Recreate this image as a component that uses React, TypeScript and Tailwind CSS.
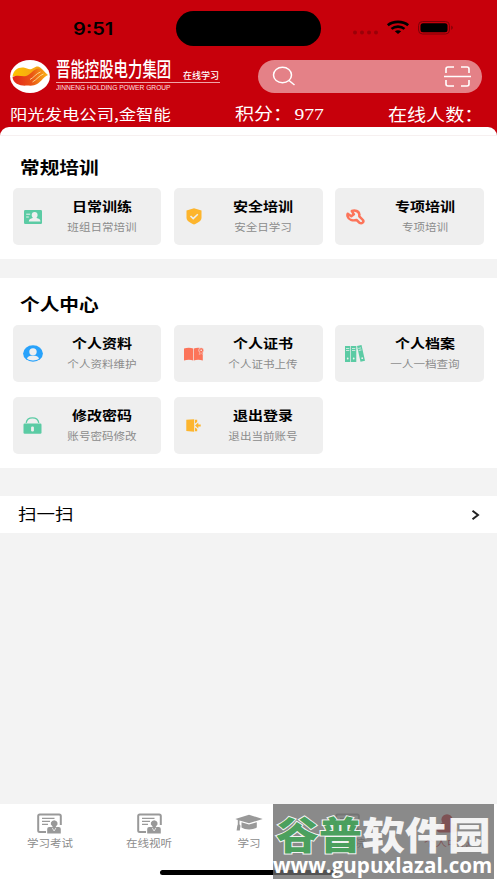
import type { ReactNode } from 'react';

type Entry = { title: string; desc: string; icon: ReactNode };

const wide = 'inline-block whitespace-nowrap scale-x-[1.155]';

const trainings: Entry[] = [
  { title: '日常训练', desc: '班组日常培训', icon: <IdCardIcon /> },
  { title: '安全培训', desc: '安全日学习', icon: <ShieldIcon /> },
  { title: '专项培训', desc: '专项培训', icon: <WrenchIcon /> },
];

const personal: Entry[] = [
  { title: '个人资料', desc: '个人资料维护', icon: <UserIcon /> },
  { title: '个人证书', desc: '个人证书上传', icon: <BookIcon /> },
  { title: '个人档案', desc: '一人一档查询', icon: <FilesIcon /> },
  { title: '修改密码', desc: '账号密码修改', icon: <LockIcon /> },
  { title: '退出登录', desc: '退出当前账号', icon: <ExitIcon /> },
];

const tabs = [
  { label: '学习考试', icon: <ExamIcon />, active: false },
  { label: '在线视听', icon: <ExamIcon />, active: false },
  { label: '学习', icon: <CapIcon />, active: false },
  { label: '电影院', icon: <ExamIcon />, active: false },
  { label: '个人中心', icon: <PersonIcon />, active: true },
];

function IdCardIcon() {
  return (
    <svg width="18" height="14" viewBox="0 0 18 14">
      <rect width="18" height="14" rx="1.2" fill="#5bcba4" />
      <path d="M2.2 4.2h4M2.2 7h2.6" stroke="#efefef" strokeWidth="1" />
      <path d="M10.600 2c1.900 0 3 1.300 3 3 0 1-.4 1.900-1 2.400v.5c1.900.5 3.900 1.200 3.900 3.500H4.800c0-2.300 2-3 3.900-3.500v-.5c-.6-.5-1-1.400-1-2.400 0-1.700 1.100-3 2.900-3z" fill="#efefef" />
    </svg>
  );
}

function ShieldIcon() {
  return (
    <svg width="16" height="17" viewBox="0 0 16 17">
      <path d="M8 .3 15.500 2.500v7.300c0 3.200-4 5.300-7.500 6.700-3.500-1.400-7.500-3.500-7.500-6.700V2.500z" fill="#fdb52d" />
      <path d="m4.500 8 2.700 2.600 4.600-4.400" fill="none" stroke="#efefef" strokeWidth="1.500" />
    </svg>
  );
}

function WrenchIcon() {
  return (
    <svg width="19" height="16" viewBox="0 0 19 16" fill="none" stroke="#fc745a" strokeWidth="2.500" strokeLinejoin="round">
      <path d="M5.800 2C9 .9 13 2 13.300 5.500c.1.700-.1 1.300 0 1.800l3.600 3.700c1.500 2-1 4-3.300 2.900l-3-2.900c-4 .9-8-.4-9-3.700-.3-1-.2-1.900.1-2.600l3.600 2.600 2.600-2z" />
    </svg>
  );
}

function UserIcon() {
  return (
    <svg width="20" height="17" viewBox="0 0 20 17">
      <ellipse cx="10" cy="8.500" rx="9.900" ry="8.300" fill="#28a2fb" />
      <ellipse cx="10" cy="6.800" rx="3.700" ry="3.500" fill="#efefef" />
      <path d="M4 13.800c.4-2.300 3-3.200 6-3.200s5.600.9 6 3.200c-3 2.300-9 2.300-12 0z" fill="#efefef" />
    </svg>
  );
}

function BookIcon() {
  return (
    <svg width="20" height="14" viewBox="0 0 20 14">
      <path d="M0 1.500C3 .5 6.500.5 9.200 1.500v12c-2.500-1-6-1-9.200 0zM9.900 1.500c2.500-1 6-1 8.900 0v12c-3-1-6.300-1-8.900 0z" fill="#fc745a" />
      <circle cx="17.200" cy="3.200" r="2.500" fill="#fc745a" stroke="#efefef" strokeWidth=".6" />
      <path d="m15.700 5.300-.5 2.200 2-1 2 1-.5-2.200" fill="#fc745a" stroke="#efefef" strokeWidth=".4" />
      <circle cx="17.200" cy="3.200" r=".8" fill="#efefef" />
    </svg>
  );
}

function FilesIcon() {
  return (
    <svg width="20" height="17" viewBox="0 0 20 17" fill="#5bcba4">
      <path d="M0 .9h5.300V17H0zM6 .9h5.300V17H6zM12 .9l4.500-.8L20 15.800l-4.500.9z" />
      <g fill="#efefef">
        <path d="M1 3h3.300v.7H1zM1 5h3.300v.7H1zM7 3h3.300v.7H7zM7 5h3.300v.7H7zM13.200 3l2.800-.5.2.7-2.800.5zM13.600 5l2.800-.5.2.7-2.800.5z" />
        <circle cx="2.700" cy="13.500" r=".9" />
        <circle cx="8.700" cy="13.500" r=".9" />
        <circle cx="17.200" cy="13.200" r=".9" />
      </g>
    </svg>
  );
}

function LockIcon() {
  return (
    <svg width="19" height="17" viewBox="0 0 19 17">
      <path d="M3.200 5.800C4.300-.8 14.500-.8 15.800 5.800" fill="none" stroke="#5bcba4" strokeWidth="1.300" />
      <rect x=".5" y="6.600" width="18" height="10.200" rx="1.200" fill="#5bcba4" />
      <rect x="8.100" y="9.500" width="2.800" height="5" rx="1.200" fill="#efefef" />
    </svg>
  );
}

function ExitIcon() {
  return (
    <svg width="15" height="13" viewBox="0 0 15 13" fill="#fdb52d">
      <path d="M.3.700 8.200.3v12.500L.3 12zM9 .7h2.200v2.400L9 4.600zM9 12.300h2.200V9.900L9 8.400z" />
      <path d="M9 6.500 12.300 3.500v2h2.400v2h-2.400v2z" />
    </svg>
  );
}

function ExamIcon() {
  return (
    <svg width="25" height="21" viewBox="0 0 25 21">
      <path d="M9 19H2.800Q1.200 19 1.200 17.500V3q0-1.500 1.600-1.500h19.400Q23.800 1.500 23.800 3v9" fill="none" stroke="#999" strokeWidth="2" />
      <path d="M5 5.300h12.500M5 8.300h8M5 11.300h6" stroke="#999" strokeWidth="1.300" />
      <path d="M17.200 7.200a3.700 3.200 0 0 1 2 5.700l-.5 1.200h3.100q2 0 2 2V20.500H10.200v-4.400q0-2 2-2h3.500l-.5-1.200a3.700 3.200 0 0 1 2-5.700z" fill="#999" />
      <path d="m15.200 14.800 1.900 3.200 1.900-3.200" fill="none" stroke="#fff" strokeWidth=".7" />
    </svg>
  );
}

function CapIcon() {
  return (
    <svg width="28" height="18" viewBox="0 0 28 18" fill="#999">
      <path d="M14 .8 27.700 5 14 9.300 4.500 6.400v3.800l1 1.500-.7 4.800H1.600l.7-4.800.5-1.300V5.900L.3 5z" />
      <path d="M6.500 8.200 14 10.600l7.800-2.400v5.400c-3.500 2.500-11.800 2.500-15.300 0z" />
    </svg>
  );
}

function PersonIcon() {
  return (
    <svg width="20" height="19" viewBox="0 0 20 19" fill="#c7000b">
      <ellipse cx="10" cy="5.500" rx="5.600" ry="5.300" />
      <path d="M5.500 8.500h9l3 2q2.500 2 2.500 6.500-1 1.500-3 1.500H3Q1 18.500 0 17q0-4.500 2.500-6.500z" />
    </svg>
  );
}

function BrandMark() {
  return (
    <svg width="40" height="33" viewBox="0 0 40 33">
      <defs>
        <linearGradient id="gold" x1="0" y1="0" x2="1" y2="0">
          <stop offset="0" stopColor="#fdc300" />
          <stop offset="1" stopColor="#f39a1c" />
        </linearGradient>
        <linearGradient id="flame" x1="0" y1="0" x2="1" y2="0">
          <stop offset="0" stopColor="#e3231b" />
          <stop offset=".55" stopColor="#ea5514" />
          <stop offset="1" stopColor="#fbb617" />
        </linearGradient>
      </defs>
      <ellipse cx="20" cy="16.500" rx="19.900" ry="16.400" fill="#fff" />
      <path d="M2.500 16.500C3.500 10 8 7 13.500 7.500c3.500.3 5 2.500 8 1.500l5-2.500c3-.5 6 2.500 7.500 5L22 19c-7 2-12-5-19.500-2.500z" fill="url(#gold)" />
      <path d="M2.500 17c5-2.500 8.500-.5 12.500-.8 5.500-.5 8-7.700 14-7.700 3 0 6 4 9 6.500-5 2-8 9-14 10.300-3 .7-5 .2-8 .3-6 .3-13-2-13.500-8.600z" fill="url(#flame)" />
      <path d="M20 19.500c4-2 6-6 10.500-7.500M22.500 22c4.500-2.500 6.500-6.500 11-8" fill="none" stroke="#ffe9a8" strokeWidth=".8" />
    </svg>
  );
}

function StatusBar() {
  return (
    <div className="relative flex h-[56px] items-start">
      <div className="absolute left-[73px] top-[18px] text-[17px] font-semibold leading-[20px] text-black">
        <span className="inline-block origin-left scale-x-[1.180] font-['Inter']">9:51</span>
      </div>
      <div className="ml-[176px] mt-[11px] h-[35px] w-[145px] rounded-full bg-black" />
      <svg className="ml-[31px] mt-[20px]" width="102" height="16" viewBox="0 0 102 16">
        <g fill="#9a0008">
          <circle cx="3" cy="12.400" r="2" />
          <circle cx="10" cy="12.400" r="2" />
          <circle cx="17" cy="12.400" r="2" />
          <circle cx="24" cy="12.400" r="2" />
        </g>
        <g fill="none" stroke="#000" strokeWidth="2.600">
          <path d="M35.800 5.300C41 .7 51 .7 56.200 5.300" />
          <path d="M39.500 8.900c3.500-3.100 9.500-3.100 13 0" />
        </g>
        <path d="M42.800 11.200q3.200-2 6.400 0L46 14z" />
        <rect x="66.500" y="1.500" width="31" height="12.500" rx="4" fill="none" stroke="#7d0007" strokeWidth="1" />
        <rect x="68.500" y="3.300" width="27" height="9" rx="2.500" />
        <path d="M99.300 5.600q3 2.100 0 4.300z" fill="#7d0007" />
      </svg>
    </div>
  );
}

function Header() {
  return (
    <header className="h-[127px] bg-[#c7000b] text-white">
      <StatusBar />
      <div className="flex h-[40px] items-center pl-[10px]">
        <BrandMark />
        <div className="ml-[6px] h-[38px] w-[164px]">
          <div className="flex h-[26px] items-end justify-between border-b border-[#f0a5a8]">
            <div className="w-[118px]">
              <span className="inline-block origin-left scale-x-[0.720] whitespace-nowrap text-[20px] font-medium leading-[22px]">
                晋能控股电力集团
              </span>
            </div>
            <span className="mr-[1px] text-[9px] font-medium leading-[12px]">在线学习</span>
          </div>
          <span className="block w-max origin-left scale-x-[0.950] whitespace-nowrap font-['Liberation_Sans'] text-[7px] leading-[10px] text-[#ffe0e0]">
            JINNENG HOLDING POWER GROUP
          </span>
        </div>
        <div className="ml-[38px] flex h-[33px] w-[224px] items-center justify-between rounded-full bg-[#e48187] pl-[14px] pr-[11px]">
          <svg width="24" height="20" viewBox="0 0 24 20" fill="none" stroke="#fff" strokeWidth="1.500">
            <ellipse cx="10.500" cy="9" rx="9" ry="7.800" />
            <path d="m17 14.500 5.500 4.500" />
          </svg>
          <svg width="27" height="21" viewBox="0 0 27 21" fill="none" stroke="#fff" strokeWidth="1.600">
            <path d="M2 7V3q0-2 2-2h6M17 1h6q2 0 2 2v4M2 14v4q0 2 2 2h6M17 20h6q2 0 2-2v-4M0 10.500h27" />
          </svg>
        </div>
      </div>
      <div className="flex h-[31px] items-center pl-[10px] pt-[5px]">
        <div className="w-[225px] text-[15px]">
          <span className={`${wide} origin-left`}>阳光发电公司,金智能</span>
        </div>
        <div className="w-[153px] text-[16.500px]">
          <span className={`${wide} origin-left leading-[24px]`}>
            积分：<span className="ml-[2px] font-['Liberation_Serif'] text-[17px]">977</span>
          </span>
        </div>
        <div className="w-[100px] text-[16.500px]">
          <span className={`${wide} origin-left leading-[24px]`}>在线人数：</span>
        </div>
      </div>
    </header>
  );
}

function EntryCard({ title, desc, icon }: Entry) {
  return (
    <div className="flex h-[57px] items-center rounded-[5px] bg-[#efefef]">
      <div className="flex w-[40px] justify-center">{icon}</div>
      <div className="flex flex-1 flex-col items-center pr-[10px] pt-[1px]">
        <span className={`${wide} text-[13px] font-bold leading-[20px] text-black`}>{title}</span>
        <span className={`${wide} text-[10px] leading-[22px] text-[#8c8c8c]`}>{desc}</span>
      </div>
    </div>
  );
}

function Section({ title, items }: { title: string; items: Entry[] }) {
  return (
    <>
      <h2 className="pl-[20px] text-[17px] font-bold leading-[24px] text-black">
        <span className={`${wide} origin-left`}>{title}</span>
      </h2>
      <div className="mt-[9px] grid grid-cols-3 gap-x-[12.500px] gap-y-[14.500px] pl-[12.500px] pr-[13px]">
        {items.map((item) => (
          <EntryCard key={item.title} {...item} />
        ))}
      </div>
    </>
  );
}

function Watermark() {
  return (
    <div className="absolute left-[273px] top-[804px] h-[75px] w-[221px] overflow-hidden bg-[#696969]/78 text-white">
      <div className="absolute left-[3px] top-[6px] origin-left scale-x-[1.130] whitespace-nowrap text-[38px] font-black leading-[46px] opacity-90">
        <span className="text-[#45a35a] [-webkit-text-stroke:2px_#fff] [paint-order:stroke_fill]">谷普</span>
        <span>软件园</span>
      </div>
      <div className="absolute left-0 top-[49px] origin-left scale-x-[0.980] whitespace-nowrap font-['Open_Sans'] text-[21px] font-bold leading-[24px]">
        www.gupuxlazal.com
      </div>
    </div>
  );
}

export default function App() {
  return (
    <div className="relative flex h-[883px] w-[497px] flex-col overflow-hidden bg-[#f3f3f3] font-['Noto_Sans_CJK_SC',sans-serif]">
      <Header />
      <div className="bg-[#c7000b]">
        <div className="h-[132px] rounded-t-[9px] bg-white">
          <div className="mb-[19px] h-[9px] border-b border-[#f6f0f0]" />
          <Section title="常规培训" items={trainings} />
        </div>
      </div>
      <div className="mt-[19px] h-[190px] bg-white pt-[14px]">
        <Section title="个人中心" items={personal} />
      </div>
      <div className="mt-[28px] flex h-[37px] items-center justify-between bg-white pl-[18px] pr-[17px]">
        <span className={`${wide} origin-left pb-[3px] text-[16px] text-black`}>扫一扫</span>
        <svg width="9" height="10" viewBox="0 0 9 10" fill="none" stroke="#222" strokeWidth="2">
          <path d="m1.500.8 5.500 4.200-5.500 4.200" />
        </svg>
      </div>
      <nav className="mt-auto flex h-[79px] bg-white pt-[8px]">
        {tabs.map((tab) => (
          <div key={tab.label} className="flex flex-1 flex-col items-center">
            <div className="flex h-[22px] items-center">{tab.icon}</div>
            <span className={`${wide} text-[10px] leading-[18px] ${tab.active ? 'text-[#c7000b]' : 'text-[#8c8c8c]'}`}>
              {tab.label}
            </span>
          </div>
        ))}
      </nav>
      <div className="absolute left-[160px] top-[870px] h-[5px] w-[177px] rounded-full bg-black" />
      <Watermark />
    </div>
  );
}
